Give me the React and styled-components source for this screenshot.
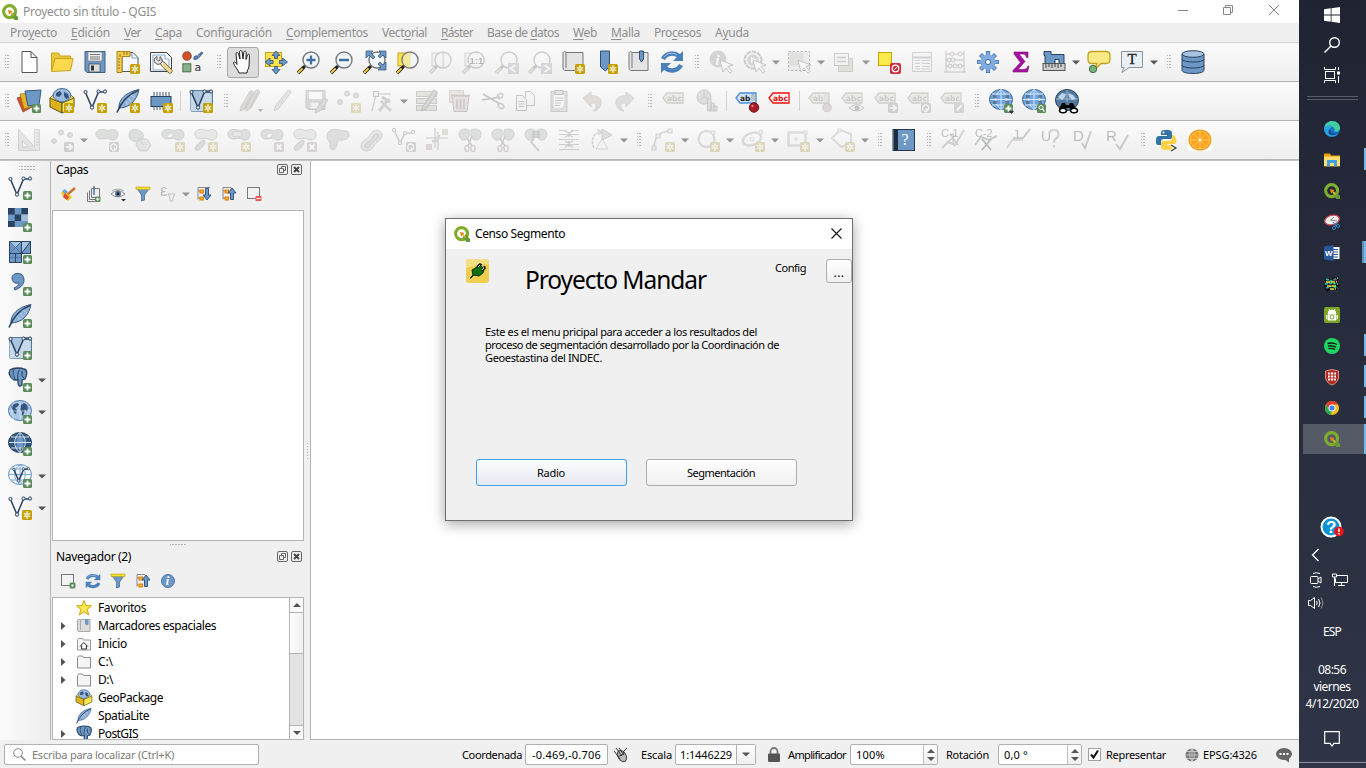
import React, { useLayoutEffect, useRef, useState } from "react";
import styled, { createGlobalStyle, css } from "styled-components";

const Global = createGlobalStyle`
  *, *::before, *::after { box-sizing: border-box; }
  html, body { margin: 0; padding: 0; background: #fff; }
  body { font-family: "Noto Sans", "Open Sans", sans-serif; font-size: 12px; color: #000; overflow: hidden; }
  svg { display: block; flex: none; overflow: visible; }
`;

/* ---------- text ---------- */

const TextBox = styled.span`
  display: block;
  flex: none;
  width: ${(p) => p.$w}px;
  margin-left: ${(p) => p.$ml || 0}px;
  font-size: ${(p) => p.$size || 12}px;
  line-height: ${(p) => p.$lh || 16}px;
  color: ${(p) => p.$color || "inherit"};
  white-space: pre;
`;

// Tracks the text so that it fills exactly the width of its box.
function Text({ w, ml, size, lh, color, children }) {
  const ref = useRef(null);
  const [spacing, setSpacing] = useState(0);
  useLayoutEffect(() => {
    const el = ref.current;
    const natural = el.getBoundingClientRect().width;
    const count = el.textContent.length;
    setSpacing((w - natural) / count);
  }, [w]);
  return (
    <TextBox $w={w} $ml={ml} $size={size} $lh={lh} $color={color}>
      <span ref={ref} style={{ letterSpacing: spacing }}>{children}</span>
    </TextBox>
  );
}

/* ---------- shared drawing parts ---------- */

const BLUE = "#6d97c4";
const NAVY = "#2a4361";

const AddBadge = () => (
  <g>
    <rect x="15" y="15" width="9" height="9" rx="1.5" fill="#5b8c5a" stroke="none" />
    <path d="M19.5 16.5v6M16.5 19.5h6" stroke="#fff" strokeWidth="1.8" />
  </g>
);
const NewBadge = () => (
  <g>
    <rect x="14" y="14" width="10" height="10" rx="1.5" fill="#c4a000" stroke="none" />
    <path d="M19 15.3v7.400M15.800 17.2l6.400 3.6M22.200 17.2l-6.400 3.6" stroke="#fff" strokeWidth="1.3" />
    <circle cx="19" cy="19" r=".8" fill="#c4a000" stroke="none" />
  </g>
);
const ArrowBadge = () => (
  <g>
    <rect x="14" y="14" width="10" height="10" rx="1.5" fill="#8a8a8a" stroke="none" />
    <path d="M15.5 19h5M19 16.2l3 2.8-3 2.8" stroke="#fff" strokeWidth="1.6" fill="none" />
  </g>
);
const TurnBadge = () => (
  <g>
    <rect x="14" y="14" width="10" height="10" rx="1.5" fill="#8a8a8a" stroke="none" />
    <path d="M17 21.5a3 3 0 1 1 2 .5M19.5 19.5v3h-2.5" stroke="#fff" strokeWidth="1.3" fill="none" />
  </g>
);
const DelBadge = () => (
  <g>
    <rect x="14" y="14" width="10" height="10" rx="1.5" fill="#b98f97" stroke="none" />
    <path d="M16.5 16.5l5 5M21.5 16.5l-5 5" stroke="#fff" strokeWidth="1.8" />
  </g>
);
const Lens = ({ gray }) => (
  <g>
    <path d="M8.2 15.8L6 18" stroke={gray ? "#666" : "#222"} strokeWidth="3" />
    <path d="M6.5 17.5L1 23" stroke={gray ? "#777" : "#1c1c1c"} strokeWidth="3.6" />
    <path d="M5.6 18.4L1.2 22.8" stroke={gray ? "#c9c19b" : "#f9d13c"} strokeWidth="2" />
    <circle cx="14" cy="10" r="8" fill="#f2f5f7" fillOpacity=".75" stroke="#75797c" strokeWidth="1.4" />
  </g>
);
const BLOB_PATH = "M1 7C0 3 4 1 8 1.500c4 .5 5 1.500 8 .5 4-1.500 7 1 7 4.500 0 4-3 6-6 5.500-3-1-4-2-7-1.500-4 1-8 1-9-3.500z";
const Blob = ({ fill = "#a5b3a7" }) => <path d={BLOB_PATH} fill={fill} stroke="#7f8981" />;
const Polyline = ({ sw = 1.5 }) => (
  <g stroke={NAVY} fill="none">
    <path d="M2.5 3.5L9 18.5 15.5 3h6" strokeWidth={sw} />
    <g fill="#e8edf2" strokeWidth="1"><circle cx="2.5" cy="3" r="1.6" /><circle cx="9" cy="18.5" r="1.7" /><circle cx="15.5" cy="2.5" r="1.6" /><circle cx="22" cy="2.5" r="1.6" /></g>
  </g>
);
const Feather = () => (
  <g>
    <path d="M23 .5C15 2 8 6 5 11c-2 3-2 6-2 8 5 0 10-2 13-5 4-4 6-8 7-13.500z" fill="#8fb2d8" stroke="#3b5c83" />
    <path d="M22 1.500C13 5 5 13 1 23.500" stroke={NAVY} strokeWidth="1.5" fill="none" />
    <path d="M9 12l3 4M12 9l3 4M15 6l4 3" stroke="#c4d9ee" strokeWidth=".9" />
  </g>
);
const Globe = ({ fill = "#8db9e8", line = "#fff", edge = "#4b7fbd" }) => (
  <g>
    <ellipse cx="12" cy="10.500" rx="11.5" ry="10" fill={fill} stroke={edge} />
    <path d="M1 10.500h22M3 5h18M3 16h18M12 .5v20M12 .5c-7 5-7 15 0 20M12 .5c7 5 7 15 0 20" stroke={line} fill="none" />
  </g>
);
const World = () => (
  <g>
    <ellipse cx="12" cy="10.500" rx="11.5" ry="10" fill="#a9c6e6" stroke="#4b76a8" />
    <path d="M3 6l3-2 4-1 1 2-2 2-2 1 2 2-1 4-2-1-1-3-2-2zM13 5l3-2 4 2 1 4-2 1 1 2-2-1-1-2-1 4-1 3-1-1v-3l-2-2z" fill="#33557f" />
    <path d="M1 11h22M12 1v19M6 2q-5 8 0 17M18 2q5 8 0 17" stroke="#dbe8f5" strokeWidth=".7" fill="none" />
  </g>
);
const Tag = ({ stroke = "#8b8a72", fill = "#cfcebd", text = "#77766a", label = "abc" }) => (
  <g>
    <path d="M1 9l4-5h16v10H5z" fill={fill} stroke={stroke} strokeWidth="1.3" />
    <text x="5" y="12" fontFamily="DejaVu Sans" fontWeight="700" fontSize="7.500" fill={text}>{label}</text>
  </g>
);
const Cylinder = () => (
  <g fill={BLUE} stroke={NAVY}>
    <path d="M1 4v16c0 2 4 3.500 11 3.500S23 22 23 20V4" />
    <path d="M1 9c0 4 22 4 22 0M1 15c0 4 22 4 22 0" fill="none" />
    <ellipse cx="12" cy="4" rx="11" ry="3.300" fill="#a8c3df" />
  </g>
);
const Scissors = () => (
  <g stroke="#777" fill="none">
    <path d="M9 10l5 8M14 8l-4 10" strokeWidth="1.500" />
    <ellipse cx="9" cy="20.500" rx="2" ry="3" stroke="#a88" strokeWidth="1.500" /><ellipse cx="15" cy="20.500" rx="2" ry="3" stroke="#a88" strokeWidth="1.500" />
  </g>
);
const Lobes = () => (
  <g fill="#a5b3a7" stroke="#7f8981">
    <path d="M11 2C7 0 1 1 1 6s5 8 8 5 2-5 2-9zM13 2c4-2 10-1 10 4s-5 8-8 5-2-5-2-9z" />
  </g>
);
const Cube = () => (
  <g>
    <path d="M0 9l12 5v10L0 18z" fill="#dcb31b" stroke="#5f5012" /><path d="M12 14l12-5v9l-12 6z" fill="#fbe850" stroke="#5f5012" />
    <path d="M0 9l4-4 8 9zM24 9l-4-4-8 9z" fill="#f2dc66" stroke="#5f5012" strokeWidth=".7" />
    <path d="M3 7a9 7.500 0 0 1 18 0c-2 4-5 5-9 6-4-1-7-2-9-6z" fill="#9dbbdc" stroke="#466c99" />
    <path d="M6 4l4-2 2 3-3 3-3-1zM14 3l4 2 1 4-3 1-2-3z" fill="#33557f" />
  </g>
);
const Cursor = () => <path d="M11 10l13 5-5 1.500 4 5-2 1.800-4-5.300-3 4z" fill="#fff" stroke="#666" />;
const Refresh = () => (
  <g fill="none" stroke="#4b80bb" strokeWidth="4.500">
    <path d="M3 9c3-6 11-7 16-3" /><path d="M21 15c-3 6-11 7-16 3" />
    <path d="M23 1v10H13z" fill="#4b80bb" stroke="none" /><path d="M1 23V13h10z" fill="#4b80bb" stroke="none" />
    <path d="M4 7c3-4 9-5 13-2" stroke="#a9caeb" strokeWidth="1" />
  </g>
);
const Elephant = () => (
  <g fill={BLUE} stroke={NAVY}>
    <path d="M2 2c4-3 12-2 14-1 4 1 3 6 1 10l-3 1v5c-2 2-4 1-4-2v-3H6C2 10 0 5 2 2z" strokeWidth="1.300" />
    <path d="M6 1.500C4 5 6 8 7 11M12 1.500C9 4 10 9 10 12M14 3v5l2 2" fill="none" />
  </g>
);
const Check = ({ letter, mark }) => (
  <g fill="none">
    <path d={mark} stroke="#5f7c73" strokeWidth="2" />
    <text x="0" y="13" fontFamily="Liberation Sans" fontSize="15" fill="#444">{letter}</text>
  </g>
);
const Crossout = "M1 20l6-6 7 3 9-15";

/* ---------- toolbar icons, 24 x 24 ---------- */

const icons = {
  newDoc: <path d="M5 1.500h9l6 6v15H5zM14 1.500v6h6" fill="#fff" stroke="#555" />,
  open: <g stroke="#c8a41c"><path d="M1.500 21V3h7l2 3h10v4" fill="#e9c63a" /><path d="M1.500 21.500L5 8.500h18l-2.500 12z" fill="#fcd94e" /></g>,
  save: <g><path d="M2 1.500h20v21H4l-2-2z" fill={BLUE} stroke="#3f6187" /><rect x="5" y="2" width="14" height="9" fill="#eee" stroke="#777" strokeWidth=".6" /><path d="M7 4.500h10M7 7h10M7 9h10" stroke="#777" /><rect x="6" y="14" width="11" height="8" fill="#d8dde2" stroke="#444" strokeWidth=".7" /><rect x="8" y="15.500" width="3" height="5" fill="#333" /></g>,
  layout: <g><path d="M6 2.500h11l5 5v14H6z" fill="#f5f8fb" stroke="#555" /><path d="M8 5h8M16 3v5h6" stroke="#7ea6d0" fill="none" /><path d="M1 1.500h13v5H6v16H1z" fill="#f5cd4c" stroke="#a9851c" /><path d="M4 4v3M8 2v3M11 2v3M2 9h2M2 12h2M2 15h2M2 18h2" stroke="#8f7216" /><NewBadge /></g>,
  layoutManager: <g><path d="M1.500 2.500h16l5 5v14h-21z" fill="#f9fbfd" stroke="#444" /><path d="M4 5h12v4h4v11H4z" fill="none" stroke="#86abd4" /><path d="M11 11l3 3" stroke="#555" strokeWidth="4.500" /><path d="M14.500 14.500l6.500 6.500" stroke="#7b6c35" strokeWidth="5.200" strokeLinecap="round" /><path d="M10 10l5 5" stroke="#eee" strokeWidth="2.800" /><path d="M15 15l6 6" stroke="#f0d994" strokeWidth="3.500" strokeLinecap="round" /><path d="M8 6.500a4 4 0 1 0 5 5c.5-2-.5-4-2-5v3.500L9.500 11 8 9.500z" fill="#e4e4e4" stroke="#555" /></g>,
  style: <g><circle cx="5" cy="6" r="4.300" fill="#d0522b" stroke="#91361a" strokeWidth=".8" /><rect x=".8" y="13.800" width="8" height="8" fill="#8bb08b" stroke="#4a704a" /><path d="M12 9q0-3 3-3l1.500 1.500Q15 10 12 9zM16 5.500L20 2M17 7l4-4.500" fill={BLUE} stroke="#476f9b" strokeWidth="1.300" /><text x="12.500" y="20.500" fontSize="11" fontFamily="DejaVu Sans" fill="#333">a</text></g>,
  hand: <path d="M8 23c-1-4-5-7-5.500-10 .5-2 2-1 3.500 1.500L5 4c0-2 2-2 2.500 0L9 9 8.500 2c.2-2 2.500-2 2.700 0L12 9l.8-6.500c.4-2 2.500-1.500 2.400 0L15 9.500l1.500-4.500c.7-1.500 2.300-1 2 .5L18 16c-.2 3-2 4-2 7z" fill="#fff" stroke="#222" />,
  panSel: <g><rect x="1.500" y="2.500" width="16" height="14" fill="#fce24b" stroke="#c8a41c" /><g fill={BLUE} stroke="#2f4f76" strokeWidth=".8"><path d="M12 1l4 4.500h-2.500v3h-3v-3H8zM12 24l4-4.500h-2.500v-3h-3v3H8zM1 12l5-4v2.500h3v3H6V16zM23.500 12l-5-4v2.500h-3v3h3V16z" /></g></g>,
  zoomIn: <g><Lens /><path d="M14 5.500v9M9.500 10h9" stroke="#3f6f9f" strokeWidth="2.300" /></g>,
  zoomOut: <g><Lens /><path d="M9 10h10" stroke="#3f6f9f" strokeWidth="2.500" /></g>,
  zoomFull: <g><Lens /><g fill={BLUE} stroke="#2f4f76" strokeWidth=".7"><path d="M3 1h7L8 3l4 4-2 2-4-4-3 3zM23 1v7l-3-3-3 3-2-2 3-3-2-2zM23 20h-8l3-3-3-3 2-2 3 3 3-3z" /></g></g>,
  zoomSel: <g><rect x="2" y="3" width="12" height="13" fill="#fce24b" stroke="#c8a41c" /><Lens /><path d="M8 5.500q3-3 6-3v15c-6 0-9-7-6-12z" fill="#f3e58b" opacity=".8" /></g>,
  zoomLayer: <g><rect x="3" y="3" width="12" height="13" fill="#eee" stroke="#888" /><Lens gray /><path d="M14 3v14" stroke="#888" /></g>,
  zoomNative: <g><rect x="3" y="3" width="12" height="13" fill="#eee" stroke="#888" /><Lens gray /><text x="7.500" y="13.500" fontSize="9.500" fontWeight="700" fontFamily="Liberation Sans" fill="#333">1:1</text></g>,
  zoomLast: <g><Lens gray /><rect x="13" y="13" width="11" height="11" fill="#93a1ad" /><path d="M20.500 15l-5 3.500 5 3.500" stroke="#fff" strokeWidth="1.800" fill="none" /></g>,
  zoomNext: <g><Lens gray /><rect x="13" y="13" width="11" height="11" fill="#93a1ad" /><path d="M16.500 15l5 3.500-5 3.500" stroke="#fff" strokeWidth="1.800" fill="none" /></g>,
  newMap: <g><path d="M5 2.500h17v18H5c-2.500 0-3-1-3-3V3c.5-2 3-2 3 0v15" fill="#e4e4e4" stroke="#777" /><NewBadge /></g>,
  bookmarkNew: <g><path d="M6.500 1h9v15l-4 5-5-4z" fill={BLUE} stroke="#2f4f76" /><NewBadge /></g>,
  bookmark: <g><path d="M5 2.500h16v18H5c-2.500 0-3-1-3-3V3c.5-2 3-2 3 0v15" fill="#e4e4e4" stroke="#777" /><path d="M12.500 1h4v8l-2 3-2-3z" fill={BLUE} stroke="#2f4f76" /></g>,
  refresh: <Refresh />,
  identify: <g><circle cx="9" cy="9" r="8.500" fill="#87949c" /><text x="6.500" y="14.500" fontSize="15" fontFamily="Liberation Serif" fontStyle="italic" fontWeight="700" fill="#fff">i</text><Cursor /></g>,
  action: <g><circle cx="11" cy="10" r="8.500" fill="#ddd" stroke="#777" strokeWidth="2" strokeDasharray="4.500 1" /><circle cx="11" cy="10" r="5.500" fill="#8d989f" /><path d="M9 7l6 3-6 3z" fill="#fff" /><Cursor /></g>,
  select: <g><rect x="1.500" y="1.500" width="21" height="19" fill="#ddd" stroke="#444" strokeDasharray="2.500 1.500" /><rect x="2.500" y="2.500" width="14" height="13" fill="#bdb7a3" /><Cursor /></g>,
  selectForm: <g><rect x="6.500" y="8.500" width="14" height="13" fill="#bdb993" stroke="#8c8977" /><rect x="2.500" y="3.500" width="14" height="12" fill="#eee" stroke="#777" /><path d="M5 7.500h9M5 11.500h9" stroke="#777" strokeWidth="1.500" /></g>,
  deselect: <g><rect x="1.500" y="2.500" width="13" height="13" fill="#fce94f" stroke="#c8a400" /><rect x="13" y="13" width="11" height="11" rx="2" fill="#cf2b3b" /><circle cx="18.500" cy="18.500" r="3.300" fill="none" stroke="#fff" strokeWidth="1.300" /><path d="M16 21l5-5" stroke="#fff" /></g>,
  table: <g><rect x="2.500" y="2.500" width="19" height="19" fill="#eef0f2" stroke="#889" /><path d="M3 7.500h18" stroke="#889" strokeWidth="2" /><path d="M5 10.500h5M12 10.500h8M5 13.500h5M12 13.500h8M5 16.500h5M12 16.500h8M5 19h5M12 19h8" stroke="#889" /></g>,
  abacus: <g fill="none" stroke="#666"><path d="M3 1v21M21 1v21M1 22h22M3 4h18M3 10h18M3 16h18" /><g fill="#eaeaea"><circle cx="9" cy="4" r="2" stroke="#a66" /><circle cx="17" cy="4" r="2" stroke="#a66" /><circle cx="6" cy="10" r="2" /><circle cx="10" cy="10" r="2" /><circle cx="7" cy="16" r="2" /><circle cx="12" cy="16" r="2" /><circle cx="17" cy="16" r="2" /></g></g>,
  gear: <g><g stroke="#3f6fa8" strokeWidth="4.200"><path d="M12 1v22M1 12h22M4.500 4.500l15 15M19.500 4.500l-15 15" /></g><g stroke="#7fabe0" strokeWidth="2.800"><path d="M12 1.700v20.600M1.700 12h20.600M5 5l14 14M19 5L5 19" /></g><circle cx="12" cy="12" r="7.500" fill="#7fabe0" /><circle cx="12" cy="12" r="2.600" fill="#f4f4f4" stroke="#3f6fa8" /></g>,
  sigma: <path d="M5 2h14v5.500h-1.500C17 5 16 4 14 4h-4l6 7.500L9 19.500h5c3 0 4-1 5-3.500h1l-1.500 6H4v-1.500l7.500-8L5 4z" fill="#a6119f" stroke="#7b0c76" strokeWidth=".6" />,
  measure: <g><path d="M2 1.500h7v3h13v9h-5v-4h-4v4H3v-8H2z" fill={BLUE} stroke={NAVY} /><rect x="1" y="13.500" width="22" height="7" fill="#ccc" stroke="#555" /><path d="M4 14v4M7 14v3M10 14v4M13 14v3M16 14v4M19 14v3" stroke="#444" /></g>,
  tip: <g><path d="M5 1.500h14q4 0 4 4v4q0 4-4 4h-5l-6 6 2-6H5q-4 0-4-4v-4q0-4 4-4z" fill="#faea86" stroke="#c2a11e" strokeWidth="1.300" /><circle cx="6" cy="19" r="3.700" fill="#7ab07a" stroke="#417041" /></g>,
  annotation: <g><path d="M1.500 1.500h21v16H9l-7 5 2-5H1.500z" fill="#e9f0f4" stroke="#8b959c" /><text x="7.500" y="14" fontSize="15" fontFamily="Liberation Serif" fill="#222" stroke="#222" strokeWidth=".3">T</text></g>,
  db: <Cylinder />,

  dataSource: <g><path d="M0 9l10-3 5 12-9 5z" fill="#d0522b" stroke="#91361a" strokeWidth=".7" /><path d="M3 5l10-1 4 13-10 3z" fill="#e6b422" stroke="#94711a" strokeWidth=".7" /><path d="M8 2l16-1-2 15-11 1z" fill={BLUE} stroke="#34587f" /><AddBadge /></g>,
  geopackage: <g><Cube /><NewBadge /></g>,
  shape: <g><Polyline /><NewBadge /></g>,
  spatialite: <g><Feather /><NewBadge /></g>,
  memory: <g><path d="M5 3v18M8 3v18M11 3v18M14 3v18M17 3v18M20 3v18" stroke="#4a5e73" /><rect x="2" y="7.500" width="20" height="10" fill={BLUE} stroke={NAVY} /><NewBadge /></g>,
  virtual: <g><rect x="1.500" y="1.500" width="22" height="21" rx="1.500" fill="#a9c4df" stroke="#5a7ba0" /><path d="M1.500 22.500V5l8 14 5-15h8v18z" fill="#c8d9ea" /><Polyline /><NewBadge /></g>,
  pencils: <g stroke="#8a8079"><path d="M9 16L18 1q3-1 4 2L13 19l-5 3zM3 18L12 2q3-1 4 2L7 20l-5 2z" fill="#b7a698" /><path d="M6 20L14 4M12 19L20 3" strokeWidth="1.200" /><path d="M20 20h5l-2.500 3z" fill="#333" stroke="none" /></g>,
  pencil: <g stroke="#8a8a80"><path d="M5 16L17 1q3 0 3 2.500L8 19l-5 3z" fill="#cfcab0" /><path d="M6.500 17L18 2.500" strokeWidth=".8" /></g>,
  saveEdits: <g><path d="M2 1.500h19v19H4l-2-2z" fill="#9aa4ad" stroke="#777" /><rect x="5" y="3" width="13" height="7" fill="#fff" /><rect x="6" y="13" width="9" height="7" fill="#e6e6e6" stroke="#666" strokeWidth=".6" /><path d="M12 21L20 9l4 2-8 11-5 2z" fill="#b7a698" stroke="#777" /></g>,
  addFeature: <g fill="#a9b0a9" stroke="#7d857d"><circle cx="3" cy="13" r="2.500" /><circle cx="10" cy="4.500" r="2.500" /><circle cx="19" cy="6.500" r="2.500" /><NewBadge /></g>,
  vertex: <g fill="none" stroke="#666"><path d="M2 22L6 6M8 5h13" /><rect x="3.500" y="2.500" width="5" height="5" fill="#ddd" /><path d="M11 12l10 10M9 22l10-12" strokeWidth="3" stroke="#8d9294" /><path d="M12 8l8 5" stroke="#888" strokeWidth="3" /></g>,
  multiEdit: <g><g fill="#bdc19d" stroke="#777"><rect x="1.500" y="2.500" width="20" height="5" /><rect x="1.500" y="9.500" width="20" height="5" /><rect x="1.500" y="16.500" width="20" height="5" /></g><path d="M8 17L19 1l3.500 2.500L11 20l-5 2z" fill="#a19b92" stroke="#555" /></g>,
  trash: <g><rect x="1.500" y="1.500" width="14" height="12" fill="#c9c2a4" stroke="#999" /><path d="M4 7h17l-2 15.500H6z" fill="#d3babb" stroke="#8d6565" /><path d="M3 6.500h19M9 10v10M12.500 10v10M16 10v10" stroke="#8d6565" strokeWidth="1.500" /></g>,
  cut: <g stroke="#666" fill="none"><path d="M2 5l17 10M1 11l18-3" strokeWidth="1.500" /><ellipse cx="19" cy="7" rx="3" ry="2.200" stroke="#977" strokeWidth="1.500" transform="rotate(-35 19 7)" /><ellipse cx="20" cy="17" rx="3" ry="2.200" stroke="#977" strokeWidth="1.500" transform="rotate(35 20 17)" /></g>,
  copy: <g fill="#f2f2f2" stroke="#666"><path d="M11.500 2.500h5l4 4v10h-9z" /><path d="M2.500 6.500h6l4 4v11h-10z" /><path d="M4.500 12.500h6M4.500 15h6M4.500 17.500h6" /></g>,
  paste: <g><rect x="4" y="2.500" width="16" height="20" fill="#c7c1a9" stroke="#777" /><path d="M6 5h12v11l-3 4H6z" fill="#f5f5f5" stroke="#888" /><rect x="8" y="1.500" width="8" height="4" fill="#bbb" stroke="#555" /><path d="M8 9h8M8 11.500h8M8 14h6M8 16.500h5" stroke="#777" /></g>,
  undo: <path d="M3 9l8-6v4c6-1 11 2 10 8-1 4-4 7-8 7 5-4 4-9-2-8v4z" fill="#bda89b" stroke="#a08c80" />,
  redo: <path d="M21 9l-8-6v4C7 6 2 9 3 15c1 4 4 7 8 7-5-4-4-9 2-8v4z" fill="#a9b3a9" stroke="#8b978f" />,
  label: <Tag />,
  diagram: <g stroke="#777"><circle cx="9" cy="8" r="7" fill="#a8bfae" /><path d="M9 8V1a7 7 0 0 1 6 10z" fill="#c4a3a3" /><path d="M9 8l6 3A7 7 0 0 1 3 12z" fill="#a8b3bf" /><path d="M12.500 10h3.500v12h-3.500zM16 14h3v8h-3zM19 17h3v5h-3z" fill="#b8b4a8" /></g>,
  pinLabel: <g><Tag fill="#cfe3f7" stroke="#4a90d9" text="#222" label="ab" /><path d="M17 12V6q0-2 2 0v6" fill="#eee" stroke="#999" /><circle cx="19" cy="18.500" r="4.700" fill="#a81d25" stroke="#741016" /><circle cx="17.500" cy="17" r="1.200" fill="#e08080" /></g>,
  redLabel: <Tag fill="#ffecec" stroke="#f01010" text="#d01414" />,
  pinGray: <g><Tag label="ab" /><path d="M17 12V6q0-2 2 0v6" fill="#eee" stroke="#999" /><circle cx="19" cy="18.500" r="4.300" fill="#b79ca0" stroke="#8d7378" /></g>,
  showLabel: <g><Tag /><path d="M8 19q8-7 15 0-7 6-15 0z" fill="#eee" stroke="#666" /><circle cx="16" cy="19" r="2.500" fill="#666" /></g>,
  moveLabel: <g><Tag /><ArrowBadge /></g>,
  rotateLabel: <g><Tag /><TurnBadge /></g>,
  changeLabel: <g><Tag /><rect x="14" y="14" width="10" height="10" rx="1.500" fill="#9b9880" /><path d="M16 22l1-2.500 4-4 1.500 1.500-4 4z" fill="#fff" /></g>,
  webAdd: <g><Globe fill="#6ba5e4" line="#dbe9f8" edge="#3f628c" /><path d="M4 6h4v3H4zM16 6h4v3h-4zM4 12h4v3H4zM16 12h4v3h-4z" fill="#555e68" opacity=".65" /><AddBadge /><path d="M20 22h5l-2.500 3z" fill="#333" /></g>,
  webFind: <g><Globe fill="#6ba5e4" line="#dbe9f8" edge="#3f628c" /><path d="M4 6h4v3H4zM16 6h4v3h-4zM4 12h4v3H4zM16 12h4v3h-4z" fill="#555e68" opacity=".65" /><rect x="15" y="15" width="9" height="9" rx="1.500" fill="#5b8c5a" /><circle cx="19" cy="18.500" r="2" stroke="#fff" fill="none" /><path d="M20.500 20l2 2.500" stroke="#fff" strokeWidth="1.300" /></g>,
  webSearch: <g><ellipse cx="12" cy="11" rx="11.500" ry="10.500" fill="#54799f" stroke="#27425f" /><path d="M3 8l4-4 4 1-1 3-3 3zM13 4l5 2 3 4-4 1-3-3z" fill="#bcd5ee" /><path d="M1 10h22M12 1v12" stroke="#cfe0f1" strokeWidth=".6" /><path d="M4 20l3-6h3l1 2h3l1-2h3l3 6-4 3-2-4h-5l-2 4z" fill="#000" /><ellipse cx="8" cy="21.500" rx="3.500" ry="2.300" fill="#fff" stroke="#000" strokeWidth="1.500" /><ellipse cx="19" cy="21.500" rx="3.500" ry="2.300" fill="#fff" stroke="#000" strokeWidth="1.500" /></g>,

  digitize: <g><path d="M1.500 1.500L21 22.500H1.500z" fill="#c9c4bb" stroke="#888" /><path d="M5.500 12.500l6 6.500h-6z" fill="#f4f4f4" stroke="#888" /><path d="M17.500 1.500h5v21h-3l-2-3z" fill="#ddd8cf" stroke="#999" /><path d="M19 5h3M19 8h3M19 11h3M19 14h3M19 17h3" stroke="#888" /></g>,
  moveFeature: <g fill="#a9b0a9" stroke="#7d857d"><circle cx="4" cy="13" r="2.300" /><circle cx="11" cy="4.500" r="2.500" /><circle cx="20" cy="7" r="2.500" /><ArrowBadge /></g>,
  rotateF: <g><Blob /><TurnBadge /></g>,
  simplify: <g fill="#a5b3a7" stroke="#7f8981"><path d="M1 7c0-6 7-7 11-4 5 2 4 8 0 10S1 13 1 7z" /><path d="M11 11h8l4 6-4 6h-7l-4-6z" fill="#c3c9b9" /><path d="M9 9l7 8" /></g>,
  ring: <g><Blob /><path d="M6 8q3-4 7-2l-2 3q-4 2-5-1z" fill="#f8f8f8" stroke="#999" /><NewBadge /></g>,
  part: <g><Blob fill="#c9cec3" /><path d="M8 13c3-2 4 1 2 4s-5 6-8 5 2-7 6-9z" fill="#a5b3a7" stroke="#7f8981" /><NewBadge /></g>,
  fillRing: <g><Blob /><ellipse cx="10" cy="6" rx="5" ry="3" fill="#c7c9bd" stroke="#888" /><NewBadge /></g>,
  delRing: <g><Blob /><path d="M6 8q3-4 7-2l-2 3q-4 2-5-1z" fill="#f8f8f8" stroke="#999" /><DelBadge /></g>,
  delPart: <g><Blob fill="#c9cec3" /><path d="M8 13c3-2 4 1 2 4s-5 6-8 5 2-7 6-9z" fill="#a5b3a7" stroke="#7f8981" /><DelBadge /></g>,
  reshape: <path d="M1 8c0-6 6-8 12-6 5 1 10 0 10 4 1 5-5 6-8 6s-3 1-4 5c-1 5-7 7-7 1 1-4-3-5-3-10z" fill="#a5b3a7" stroke="#7f8981" />,
  offset: <g><path d="M2 18c0-6 6-5 9-11 2-4 6-6 10-4 4 4 2 8-3 11-3 3-4 8-10 9-4 0-6-2-6-5z" fill="#bdc5bd" stroke="#8d948d" /><path d="M6 18c0-4 6-4 8-9 1-3 4-4 5-2 2 3-2 4-4 6-3 3-4 6-7 7-1 0-2 0-2-2z" fill="#a5b3a7" stroke="#7f8981" /></g>,
  splitRings: <g stroke="#777" fill="none"><path d="M2 2l6 13 5-10h9" strokeWidth="1.500" /><g fill="#ddd"><circle cx="2" cy="2" r="1.700" /><circle cx="8" cy="15" r="1.700" /><circle cx="13" cy="5" r="1.700" /><circle cx="21" cy="4" r="1.700" /></g><TurnBadge /></g>,
  attach: <g stroke="#777" fill="none"><path d="M1 10h22M10 0v20M13 4v18" strokeWidth="1.200" /><path d="M7 13h7M14 10v-3" strokeWidth="2.500" stroke="#999" /><rect x="17" y="1" width="6" height="6" fill="#b8ad84" stroke="none" /><rect x="1" y="16" width="6" height="6" fill="#b99" stroke="none" /></g>,
  splitF: <g><Lobes /><Scissors /></g>,
  merge: <g><Lobes /><path d="M8 4h8M8 6.500h8M8 9h8M10 11l-3 3 8 9" stroke="#666" fill="none" strokeWidth="1.300" /></g>,
  rails: <g stroke="#777" fill="none" strokeWidth=".9"><path d="M2 2.500h7M14 2.500h8M2 6.500h20M2 11.500h20M2 16.500h20M2 21.500h20" /><path d="M8 3l4 2 4-2M8 9l4-2 4 2M8 13l4 2 4-2M8 19l4-2 4 2M12 4v5M12 13v6" strokeWidth="1.300" /></g>,
  rotateS: <g stroke="#777" fill="none"><path d="M4 20C0 12 4 5 10 4" strokeWidth="1.300" strokeDasharray="3 1" /><path d="M7 1l5 3-4 3M12 1l10 6-10 5z" fill="#a5b3a7" /><path d="M12 11l6 10H6z" fill="#f0f0f0" stroke="#999" /></g>,
  curve: <g fill="none" stroke="#888" strokeWidth="1.500"><path d="M3 20C4 10 6 4 19 3" /><g fill="#ddd" strokeWidth="1"><rect x="1" y="18" width="4" height="4" /><rect x="5" y="6" width="4" height="4" /><rect x="17" y="1" width="4" height="4" /></g><NewBadge /></g>,
  circle: <g fill="none" stroke="#a0a8a0" strokeWidth="2.500"><circle cx="10.500" cy="11" r="8" /><rect x="16" y="3" width="3" height="3" strokeWidth="1" fill="#ddd" /><NewBadge /></g>,
  ellipse: <g fill="none" stroke="#a0a8a0" strokeWidth="2.500"><ellipse cx="11" cy="11" rx="9.500" ry="6" transform="rotate(-20 11 11)" /><circle cx="11" cy="11" r="1.800" strokeWidth="1" /><circle cx="20" cy="4" r="1.800" strokeWidth="1" fill="#ddd" /><NewBadge /></g>,
  rect: <g fill="none" stroke="#a0a8a0" strokeWidth="2.500"><rect x="2.500" y="4.500" width="17" height="13" /><rect x="18" y="3" width="3" height="3" strokeWidth="1" fill="#ddd" /><rect x="9" y="10" width="2" height="2" strokeWidth="1" /><NewBadge /></g>,
  polygon: <g fill="none" stroke="#a0a8a0" strokeWidth="2"><path d="M9 2l11 4v10l-10 3-9-9z" /><rect x="7" y="1" width="3" height="3" strokeWidth="1" fill="#ddd" /><NewBadge /></g>,
  help: <g><rect x="1" y="1.500" width="21.500" height="21" fill={BLUE} stroke="#26384e" /><path d="M2 1h4v22H2z" fill="#1d2d3d" /><text x="9.500" y="17" fontSize="16" fontFamily="Liberation Serif" fill="#fff">?</text></g>,
  c1: <g><path d={Crossout} stroke="#9a8080" strokeWidth="2" fill="none" /><path d="M9 6l8 11M7 14l8-7M12 5v11" stroke="#5a7c86" strokeWidth="1.300" /><text x="0" y="9" fontSize="11" fontFamily="Liberation Sans" fill="#444">C-1</text></g>,
  c2: <g><path d="M1 17l6-8 8 3 8-4" stroke="#5f7c73" strokeWidth="2" fill="none" /><path d="M8 11l9 11M17 11L8 22" stroke="#444" strokeWidth="1.800" /><text x="1" y="9" fontSize="11" fontFamily="Liberation Sans" fill="#444">C-2</text></g>,
  j: <g><text x="6" y="11" fontSize="12" fontFamily="Liberation Sans" fill="#444">J</text><path d="M6 11l6-1h4l7-9" stroke="#5a7c76" strokeWidth="2" fill="none" /><path d="M0 20l5-8h11" stroke="#a88" strokeWidth="1.600" fill="none" /></g>,
  u: <g><text x="1" y="13" fontSize="14" fontFamily="Liberation Sans" fill="#444">U</text><path d="M9.500 6q0-4 4.500-4t4.500 4q0 3-2.500 4.500-2 1.500-2 4M14 17v2.500" fill="none" stroke="#a87f86" strokeWidth="2.200" /></g>,
  d: <Check letter="D" mark="M9 15l3 5 6-17" />,
  r: <Check letter="R" mark="M10 16l4 5 8-14" />,
  python: <g><path d="M11 2c-5 0-5 1-5 5h6v1H4c-3 0-3 3-3 5s0 4 3 4h2v-3c0-3 2-3 4-3h5c2 0 2-1 2-3V5c0-3-3-3-6-3z" fill="#3573a5" /><path d="M13 22c5 0 5-2 5-5h-6v-1h7c2 0 3-2 2-5s-1-4-3-4h-1v3c0 3-2 3-4 3H9c-2 0-3 1-3 3v3c0 3 4 3 7 3z" fill="#fdd244" /><circle cx="8.500" cy="4.500" r="1" fill="#fff" /><path d="M16 17l5 3-5 3" stroke="#fff" strokeWidth="3" fill="none" /><path d="M16 17l5 3-5 3" stroke="#333" strokeWidth="1.300" fill="none" /></g>,
  orange: <g><rect width="24" height="22" y="1" fill="#fff" /><ellipse cx="12" cy="12" rx="11.500" ry="10.500" fill="#f39a12" /><ellipse cx="12" cy="12" rx="9.700" ry="8.800" fill="#ffa31a" stroke="#fbd080" strokeWidth=".8" /><path d="M12 3v18M3 12h18M6 6l12 12M18 6L6 18" stroke="#ffcf7b" strokeWidth=".8" /><circle cx="12" cy="12" r="1.500" fill="#fff3c9" /></g>,

  vAdd: <g><Polyline /><AddBadge /></g>,
  raster: <g><rect x="0" y="0" width="20" height="19" fill={BLUE} /><path d="M0 0h6.700v6.500H0zM13.400 0H20v6.500h-6.600zM6.700 6.500h6.700V13H6.700zM0 13h6.700v6H0z" fill={NAVY} /><path d="M13.400 6.500H20V13h-6.600z" fill="#a3bedb" /><AddBadge /></g>,
  mesh: <g stroke={NAVY}><path d="M1.500 1.500h21v12h-9v9h-12z" fill={BLUE} /><path d="M2 2h11l-5.500 5.500zM14 2h8l-8 10z" fill="#a9c4df" stroke="none" /><path d="M1.500 1.500l12 12M13.500 1.500l-12 12" fill="none" stroke="#48698f" strokeWidth=".8" /><path d="M13.500 13.500l9-12M1.500 13.500h21M13.500 1.500v21M7.500 14v8.500" fill="none" /><path d="M2 17.500h11" stroke="#48698f" strokeWidth=".8" /><AddBadge /></g>,
  comma: <g><path d="M4 6c0-6 12-7 12 2 0 5-4 8-9 10l-1-2c3-1 5-3 5-5-4 1-7-1-7-5z" fill={BLUE} stroke="#34587f" /><AddBadge /></g>,
  featherAdd: <g><Feather /><AddBadge /></g>,
  virtualAdd: <g><rect x="1.500" y="1.500" width="22" height="21" rx="1.500" fill="#a9c4df" stroke="#5a7ba0" /><path d="M1.500 22.500V5l8 14 5-15h8v18z" fill="#c8d9ea" /><Polyline /><AddBadge /></g>,
  postgis: <g><Elephant /><AddBadge /></g>,
  wms: <g><World /><AddBadge /></g>,
  wcs: <g><Globe fill="#33557f" line="#d7e6f5" edge="#243c59" /><path d="M8.500 6h7v4h-7zM8.500 11h7v4h-7z" fill={BLUE} /><AddBadge /></g>,
  wfs: <g><Globe fill="#f4f8fc" line="#7fabd8" edge="#5b8fc7" /><g transform="translate(4 3) scale(.75)"><Polyline sw={2} /></g><AddBadge /></g>,
};

const small = {
  brush: <g><path d="M1 6l5-1 6 6-4 4Q3 12 1 6z" fill="#f1c71f" /><path d="M2 5l3-2 3 3-3 2z" fill="#67a7dc" /><path d="M5 7l4 4-2 3-4-3z" fill="#e2483a" /><path d="M8 8l7-6" stroke="#c87533" strokeWidth="2.500" /></g>,
  group: <g fill="#eee" stroke="#777"><path d="M6.500 2.500h8v9h-8z" /><path d="M4.500 4.500v9h8M2.500 6.500v9h8" fill="none" /><path d="M9 0v9" stroke="#4b76a8" strokeWidth="1.500" /><rect x="10" y="10.500" width="5.500" height="5.500" rx="1" fill="#5b8c5a" stroke="none" /><path d="M12.700 11.500v3.500M11 13.200h3.500" stroke="#fff" /></g>,
  eye: <g><path d="M1 8q7-7 14 0-7 6-14 0z" fill="#f5f5f5" stroke="#888" /><path d="M2 5q6-4 12 0" stroke="#aaa" fill="none" /><circle cx="8" cy="7.800" r="3" fill="#54799f" /><circle cx="8" cy="7.800" r="1.300" fill="#111" /><path d="M11 13h5l-2.500 2.500z" fill="#333" /></g>,
  filter: <g><path d="M1.500 2l5 7v6l3-1V9l5-7z" fill={BLUE} stroke="#466c99" strokeWidth=".8" /><path d="M1 1h14v2.500H1z" fill="#f5df2c" stroke="#b79f1a" strokeWidth=".6" /></g>,
  epsilon: <g><text x="0" y="10" fontSize="17" fontFamily="Liberation Sans" fill="#777">ε</text><path d="M8 8h7l-2 4v3H10v-3z" fill="#eee" stroke="#888" /></g>,
  expand: <g><path d="M2 1.500h12M2 1.500v12M2 5h3M2 12h3" stroke="#888" /><rect x="4" y="4" width="3.500" height="3" fill="#ffb347" stroke="#e27c00" /><rect x="4" y="11" width="3.500" height="3" fill="#ffb347" stroke="#e27c00" /><path d="M9.500 2.500h3v6.500H15l-4 5-4-5h2.500z" fill={BLUE} stroke="#2f5685" /></g>,
  collapse: <g><path d="M2 1.500h8M2 1.500v12M2 5h3M2 12h3" stroke="#888" /><rect x="4" y="4" width="3.500" height="3" fill="#ffb347" stroke="#e27c00" /><rect x="4" y="11" width="3.500" height="3" fill="#ffb347" stroke="#e27c00" /><path d="M9.500 13.500h3V7H15l-4-5-4 5h2.500z" fill={BLUE} stroke="#2f5685" /></g>,
  remove: <g><rect x="1.500" y="1.500" width="12" height="11" fill="#f2f2f2" stroke="#777" /><rect x="9.500" y="10" width="6" height="5" rx="1" fill="#ef5252" /><path d="M10.500 12.500h4" stroke="#fff" strokeWidth="1.200" /></g>,
  addSel: <g><rect x="1.500" y="1.500" width="12" height="11" fill="#f2f2f2" stroke="#777" /><rect x="9.500" y="9.500" width="6" height="6" rx="1.500" fill="#5b8c5a" /><rect x="11.500" y="11.500" width="2" height="2" fill="#fff" /></g>,
  refresh: <g transform="scale(.667)"><Refresh /></g>,
  info: <g><circle cx="8" cy="8" r="6.500" fill={BLUE} stroke="#4a76a8" /><text x="5.800" y="12" fontSize="12" fontFamily="Liberation Serif" fontStyle="italic" fontWeight="700" fill="#fff">i</text></g>,
  star: <path d="M8 .5l2 5 5.500.3-4.300 3.500 1.500 5.700L8 11.800 3.300 15l1.500-5.700L.5 5.800 6 5.500z" fill="#fbe84e" stroke="#cba61b" />,
  book: <g><path d="M4.500 1.500h9.500v12H3q-1.500 0-1.500-1.500V2Q3 .5 4.500 2v10" fill="#dcdcdc" stroke="#aaa" /><path d="M9 1h3.500v5l-1.700 1.500L9 6z" fill={BLUE} /></g>,
  home: <g><path d="M1.500 3.500l1-1h4l1 1.500h7v10h-13z" fill="#f4f4f4" stroke="#999" /><path d="M4 10.500L7.800 6.500l4 4M5.500 9.500v3.500h5V9.500" stroke="#333" fill="none" /></g>,
  folder: <path d="M1.500 3.500l1-1.500h4l1 1.500h7v10.500h-13z" fill="#f4f4f4" stroke="#8b8b8b" />,
  cube: <g transform="scale(.66)"><Cube /></g>,
  feather: <g transform="scale(.66)"><Feather /></g>,
  elephant: <g transform="scale(.82)"><Elephant /></g>,
};

const QLogo = ({ size = 16 }) => (
  <svg width={size} height={size} viewBox="0 0 16 16">
    <circle cx="7.600" cy="7.600" r="6" fill="none" stroke="#7fae2d" strokeWidth="3.100" />
    <path d="M8.500 11l3-2.500L16 13v3h-3.500z" fill="#6a9a35" />
    <path d="M6 6l4.500 1L7 10.500z" fill="#ef7d1a" />
    <path d="M8.500 8.500l3 3" stroke="#e0b43a" strokeWidth="1.600" />
  </svg>
);

/* ---------- main window ---------- */

const Screen = styled.div`
  display: flex; width: 1366px; height: 768px; overflow: hidden; background: #fff;
`;
const Window = styled.div`
  width: 1299px; height: 768px; display: flex; flex-direction: column; flex: none; background: #f0f0f0;
  position: relative;
`;
const TitleBar = styled.header`
  height: 23px; background: #fff; display: flex; align-items: center; padding: 0 18px 0 2px; color: #8f8f8f; flex: none;
`;
const Spacer = styled.div`flex: 1;`;
const WindowButtons = styled.div`
  display: flex; gap: 34px; margin-top: -3px;
`;
const MenuBar = styled.nav`
  height: 20px; display: flex; align-items: center; gap: 14px; padding-left: 10px; color: #8e8e8e;
  border-bottom: 1px solid #d0d0d0; flex: none;
`;
const Mnemonic = styled.span`text-decoration: underline; text-underline-offset: 2px;`;
const ToolRow = styled.div`
  height: 39px; display: flex; align-items: center; flex: none; padding-left: 1px;
  background: linear-gradient(#fbfbfb, #eeeeee); border-bottom: 1px solid #b4b4b4;
`;
const Cell = styled.div`
  width: 33px; height: 32px; flex: none; display: flex; align-items: center; justify-content: center;
  ${(p) => p.$off && css`svg { opacity: .33; filter: saturate(.5); }`}
  ${(p) => p.$active && css`
    height: 31px; width: 32px; margin: 0 0 0 1px; border: 1px solid #a8a8a8; border-radius: 3px; background: #dcdcdc;
  `}
`;
const GripBox = styled.div`
  width: ${(p) => (p.$first ? 11 : 16)}px; flex: none; padding-left: ${(p) => (p.$first ? 4 : 7)}px;
`;
const Dots = styled.div`
  width: ${(p) => p.$w}px; height: ${(p) => p.$h}px;
  background: conic-gradient(from 90deg at 1px 1px, transparent 270deg, #b3b3b3 0) -2px -2px / 3px 3px;
`;
const DropBox = styled.div`
  width: 12px; flex: none; display: flex; padding-left: 2px; ${(p) => p.$off && "opacity: .6;"}
`;
const Divider = styled.div`width: 1px; height: 20px; margin: 0 3px; background: #d2d2d2; flex: none;`;

const Arrow = ({ off }) => (
  <DropBox $off={off}>
    <svg width="8" height="5" viewBox="0 0 8 5"><path d="M0 .5h8l-4 4z" fill="#555" /></svg>
  </DropBox>
);
const Grip = ({ first }) => <GripBox $first={first}><Dots $w={5} $h={16} /></GripBox>;
const Icon = ({ name, size = 24, set = icons }) => (
  <svg width={size} height={size} viewBox={`0 0 ${size} ${size}`}>{set[name]}</svg>
);

// "|" grip, "/" divider, "v" drop arrow, "x" disabled drop arrow, "-" prefix disabled, "*" prefix pressed
function Tools({ items }) {
  return (
    <ToolRow>
      <Grip first />
      {items.split(" ").map((it, i) => {
        if (it === "|") return <Grip key={i} />;
        if (it === "/") return <Divider key={i} />;
        if (it === "v" || it === "x") return <Arrow key={i} off={it === "x"} />;
        const off = it[0] === "-";
        const active = it[0] === "*";
        return <Cell key={i} $off={off} $active={active}><Icon name={off || active ? it.slice(1) : it} /></Cell>;
      })}
    </ToolRow>
  );
}

const rows = [
  "newDoc open save layout layoutManager style | *hand panSel zoomIn zoomOut zoomFull zoomSel -zoomLayer -zoomNative -zoomLast -zoomNext newMap bookmarkNew bookmark refresh | -identify -action x -select x -selectForm x deselect -table -abacus gear sigma measure v tip annotation v | db",
  "dataSource geopackage shape spatialite memory / virtual | -pencils -pencil -saveEdits -addFeature -vertex x -multiEdit -trash -cut -copy -paste -undo -redo | -label -diagram / pinLabel redLabel / -pinGray -showLabel -moveLabel -rotateLabel -changeLabel | webAdd webFind webSearch",
  "-digitize -moveFeature x -rotateF -simplify -ring -part -fillRing -delRing -delPart -reshape -offset -splitRings -attach -splitF -splitF -merge -rails -rotateS x | -curve x -circle x -ellipse x -rect x -polygon x | help | -c1 -c2 -j -u -d -r | python orange",
];

const menus = [
  ["Pro", "y", "ecto", 47], ["", "E", "dición", 39], ["", "V", "er", 17], ["", "C", "apa", 27],
  ["Confi", "g", "uración", 76], ["", "C", "omplementos", 82], ["Vect", "o", "rial", 45], ["", "R", "áster", 32],
  ["Base de ", "d", "atos", 72], ["", "W", "eb", 24], ["", "M", "alla", 29], ["Pro", "c", "esos", 47], ["A", "y", "uda", 34],
];

const Body = styled.div`flex: 1; min-height: 0; display: flex; border-top: 1px solid #c4c4c4;`;
const SideBar = styled.aside`
  width: 51px; flex: none; border-right: 1px solid #b4b4b4; background: linear-gradient(90deg, #fbfbfb, #eeeeee);
  display: flex; flex-direction: column; padding-top: 4px;
`;
const SideGrip = styled.div`padding-left: 19px; height: 7px;`;
const SideItem = styled.div`height: 32px; flex: none; display: flex; align-items: center; padding-left: 8px; gap: 4px;`;

const sideItems = [["vAdd"], ["raster"], ["mesh"], ["comma"], ["featherAdd"], ["virtualAdd"], ["postgis", 1], ["wms", 1], ["wcs"], ["wfs", 1], ["shape", 1]];

const Docks = styled.section`width: 253px; flex: none; padding-left: 1px; display: flex; flex-direction: column;`;
const DockTitle = styled.div`
  height: ${(p) => p.$h}px; flex: none; display: flex; align-items: center; justify-content: space-between; padding: 0 2px 0 4px;
`;
const DockButtons = styled.div`display: flex; gap: 3px;`;
const DockTools = styled.div`
  height: ${(p) => p.$h}px; flex: none; display: flex; align-items: center; padding-left: 8px; gap: 9px;
`;
const SmallIcon = styled.div`width: 16px; flex: none; ${(p) => p.$off && "opacity: .45;"}`;
const DropArrowSlot = styled.div`margin: 0 -5px 0 -5px;`;
const Frame = styled.div`
  height: ${(p) => p.$h}px; flex: none; background: #fff; border: 1px solid #b4b4b4; display: flex; overflow: hidden;
`;
const SplitH = styled.div`height: 7px; flex: none; display: flex; justify-content: center; padding-top: 2px;`;
const SplitV = styled.div`width: 6px; flex: none; display: flex; align-items: center; padding-left: 3px;`;
const Canvas = styled.main`flex: 1; background: #fff; border-left: 1px solid #b4b4b4; border-bottom: 1px solid #b4b4b4; `;

const Tree = styled.div`flex: 1; padding-top: 1px;`;
const TreeRow = styled.div`height: 18px; display: flex; align-items: center;`;
const Branch = styled.div`width: 23px; padding-left: 8px; flex: none;`;
const Scroll = styled.div`width: 14px; flex: none; background: #e3e3e3; display: flex; flex-direction: column; border-left: 1px solid #b4b4b4;`;
const ScrollButton = styled.div`
  height: 14px; background: #fafafa; display: flex; align-items: center; justify-content: center; flex: none;
  ${(p) => p.$end && "border-top: 1px solid #b4b4b4;"}
`;
const Thumb = styled.div`height: 42px; background: linear-gradient(90deg, #fff, #efefef); border: solid #b4b4b4; border-width: 1px 0;`;

const tree = [
  ["star", "Favoritos", 48, 0], ["book", "Marcadores espaciales", 118, 1], ["home", "Inicio", 29, 1], ["folder", "C:\\", 15, 1],
  ["folder", "D:\\", 15, 1], ["cube", "GeoPackage", 65, 0], ["feather", "SpatiaLite", 51, 0], ["elephant", "PostGIS", 40, 1],
];

const FloatClose = () => (
  <DockButtons>
    <svg width="11" height="11" viewBox="0 0 11 11" fill="none" stroke="#666"><rect x=".5" y=".5" width="10" height="10" rx="1.500" /><path d="M4.500 4.500v-2h4v4h-2M2.500 4.500h4v4h-4z" /></svg>
    <svg width="11" height="11" viewBox="0 0 11 11" fill="none" stroke="#666"><rect x=".5" y=".5" width="10" height="10" rx="1.500" /><path d="M3 3l5 5M8 3L3 8" strokeWidth="2" stroke="#444" /></svg>
  </DockButtons>
);

/* ---------- status bar ---------- */

const StatusBar = styled.footer`height: 28px; flex: none; display: flex; align-items: center; padding: 1px 0 0 4px;`;
const Field = styled.div`
  width: ${(p) => p.$w}px; height: 21px; margin-left: ${(p) => p.$ml || 0}px; flex: none; background: #fff;
  border: 1px solid #b0b0b0; border-radius: 2px; display: flex; align-items: center; padding-left: ${(p) => p.$pl || 5}px;
`;
const Glyph = styled.div`width: ${(p) => p.$w}px; margin-left: ${(p) => p.$ml}px; flex: none;`;
const ComboButton = styled.div`
  width: 19px; height: 19px; margin-left: auto; border-left: 1px solid #b0b0b0; background: linear-gradient(#fff, #f0f0f0);
  display: flex; align-items: center; justify-content: center;
`;
const Spin = styled.div`
  width: 14px; height: 19px; margin-left: auto; border-left: 1px solid #c4c4c4; background: linear-gradient(#fff, #f0f0f0);
  display: flex; align-items: center; justify-content: center;
`;
const SpinArrows = () => (
  <Spin><svg width="8" height="14" viewBox="0 0 8 14"><path d="M0 5h8L4 1zM0 9h8l-4 4z" fill="#555" /></svg></Spin>
);
const CheckBox = styled.div`
  width: 13px; height: 13px; margin-left: 6px; background: #fff; border: 1px solid #a0a0a0; flex: none;
`;

/* ---------- dialog ---------- */

const Dialog = styled.section`
  position: absolute; left: 445px; top: 218px; width: 408px; height: 303px; background: #f0f0f0;
  border: 1px solid #6e6e6e; box-shadow: 0 3px 13px rgba(0, 0, 0, .36); display: flex; flex-direction: column;
`;
const DialogTitle = styled.div`
  height: 30px; flex: none; background: #fff; display: flex; align-items: center; padding: 0 10px 0 8px;
`;
const CloseGlyph = styled.div`margin-top: -2px;`;
const DialogHead = styled.div`display: flex; align-items: flex-start; height: 76px; padding-left: 20px;`;
const PlugBox = styled.div`margin-top: 10px;`;
const Heading = styled.div`margin: 13px 0 0 36px;`;
const ConfigLabel = styled.div`margin: 11px 0 0 69px;`;
const MoreButton = styled.button`
  width: 26px; height: 24px; margin: 10px 0 0 20px; padding: 3px 0 0; border: 1px solid #adadad; border-radius: 3px; flex: none;
  background: linear-gradient(#fff, #f0f0f0); display: flex; justify-content: center; align-items: center; font: inherit; color: inherit;
`;
const Message = styled.div`padding-left: 39px; height: 134px;`;
const Actions = styled.div`display: flex; gap: 19px; padding-left: 30px;`;
const Push = styled.button`
  width: 151px; height: 27px; padding: 0 1px 0 0; display: flex; align-items: center; justify-content: center; font: inherit; color: inherit;
  border: 1px solid ${(p) => (p.$focus ? "#3aa0f0" : "#adadad")}; border-radius: 3px;
  background: ${(p) => (p.$focus ? "linear-gradient(#fcfdfe, #e4e8f0)" : "linear-gradient(#fefefe, #f0f0f0)")};
`;

/* ---------- taskbar ---------- */

const TaskBar = styled.aside`
  width: 67px; flex: none; display: flex; flex-direction: column; background: linear-gradient(#1f2332, #272c3c 40%, #2f3546);
  color: #fff;
`;
const TaskButton = styled.div`
  height: ${(p) => p.$h || 31}px; flex: none; display: flex; align-items: center; justify-content: center; position: relative;
  margin: ${(p) => (p.$active ? "1px 0 0 4px" : 0)}; padding-right: ${(p) => (p.$active ? 5 : 1)}px;
  ${(p) => p.$active && "background: #555a67;"}
  ${(p) => p.$run && css`&::after {
    content: ""; position: absolute; right: 0; top: ${p.$active ? 0 : 4}px; bottom: ${p.$active ? 0 : 5}px;
    width: ${p.$run}px; background: ${p.$run > 2 ? "linear-gradient(90deg, #5b8fb9 50%, #76b9ed 50%)" : "#76b9ed"};
  }`}
`;
const DoubleLine = styled.div`height: 4px; margin: 6px 8px 13px; border: solid #5a5e6b; border-width: 1px 0; flex: none;`;
const Tray = styled.div`
  display: flex; flex: none; height: ${(p) => p.$h}px; align-items: center; justify-content: ${(p) => (p.$center ? "center" : "flex-start")};
  padding-left: ${(p) => p.$pl || 0}px; padding-right: ${(p) => (p.$center ? 1 : 0)}px; gap: 8px;
`;
const Gap = styled.div`height: ${(p) => p.$h}px; flex: none;`;
const BottomLine = styled.div`height: 1px; background: #8d909a; margin-top: 15px;`;

const task = {
  win: <path d="M0 2.300L6.700 1.300v6.200H0zM7.500 1.200L16 0v7.500H7.500zM0 8.400h6.700v6.300L0 13.700zM7.500 8.400H16V16l-8.500-1.200z" fill="#fff" />,
  search: <g fill="none" stroke="#fff" strokeWidth="1.400"><circle cx="10.500" cy="5.500" r="4.800" /><path d="M7 9L.5 15.500" /></g>,
  view: <g fill="none" stroke="#fff"><rect x="1.500" y="4.500" width="9" height="7" /><path d="M.5 0v2.500h11V0M.5 16v-2.500h11V16M14.500 0v3M14.500 9v7" /><rect x="13" y="4.500" width="3" height="3" fill="#fff" stroke="none" /></g>,
  edge: <g><circle cx="8" cy="8" r="8" fill="#1976c4" /><path d="M.3 7C1 2 5 0 8 0c5 0 8 3.500 8 7 0 2-2 3.500-4 3.500-1 0-2 0-1.500-1C12 6 4 2 .3 7z" fill="#42cfa0" /><path d="M.2 7C3 3 7 4 9 6c-4 0-4 5-1 7 2 1 4 1 6 0-3 4-14 4-13.800-6z" fill="#2aa4e0" /><path d="M6.500 8c-.5 3 3 6 7.500 4-3 3-8 3-9.500 0C4 10 5 8.500 6.500 8z" fill="#174c96" /></g>,
  explorer: <g><path d="M0 1.500h6l1 2h9v11H0z" fill="#e8a200" /><path d="M0 4.500h16v9.500H0z" fill="#ffdc73" /><path d="M3 8h10v6.500h-3V11H6v3.500H3z" fill="#3f9fe0" /></g>,
  snip: <g><ellipse cx="8" cy="6" rx="7.500" ry="4.700" fill="#eee" stroke="#c9434f" strokeWidth="1.300" transform="rotate(-15 8 6)" /><path d="M7 6l3-3M6 6l7 1" stroke="#888" /><path d="M9 8l4 5M14 8l-4 5" stroke="#39c" /><circle cx="10" cy="14" r="1.500" stroke="#2684c4" fill="none" /><circle cx="14" cy="12" r="1.500" stroke="#2684c4" fill="none" /></g>,
  word: <g><path d="M7 2h8.500v12H7z" fill="#fff" /><path d="M9 4.500h5M9 7h5M9 9.500h5M9 12h5" stroke="#2b579a" /><path d="M0 1.500L9.500 0v16L0 14.500z" fill="#2b579a" /><text x="1" y="11" fontSize="8" fontWeight="700" fontFamily="Liberation Sans" fill="#fff">W</text></g>,
  bug: <g><path d="M1 2l5 2 4-3 5 2-2 4 3 3-3 4-5-1-5 3-3-5 2-3z" fill="#111" /><path d="M2 3l5 2 7-3M1 8l5-1 8 1M2 12l6-2 6 2" stroke="#2bb6a4" strokeWidth="1.800" fill="none" strokeDasharray="3 1" /><path d="M2 6l11 0M3 10l10 0M6 13h6" stroke="#e9e13a" strokeWidth="1.600" strokeDasharray="4 1" /><path d="M10 4h3M5 9h2" stroke="#d33" strokeWidth="1.200" /></g>,
  android: <g><rect width="16" height="16" rx="2" fill="#7ba428" /><path d="M4 7a4 4 0 0 1 8 0zM4 8h8v5H4zM2.500 8v4M13.500 8v4M5 2l1 2M11 2l-1 2" fill="#fff" stroke="#fff" /><circle cx="8" cy="10" r="2" fill="none" stroke="#7ba428" /></g>,
  spotify: <g><circle cx="8" cy="8" r="8" fill="#1ed760" /><path d="M3.500 5.500q5-1.500 9.500 1M4 8.200q4-1.200 8 1M4.500 10.700q3.500-1 6.500 1" stroke="#191414" strokeWidth="1.400" fill="none" /></g>,
  shield: <g><path d="M1.500 2Q8-1 14.500 2v7q-1 5-6.500 7Q2.500 14 1.500 9z" fill="#b12a20" stroke="#e9a9a0" strokeWidth=".8" /><path d="M4 3.500h8v8H4z" fill="#fff" /><path d="M6.300 3v9M9.700 3v9M3.500 6h9M3.500 9h9" stroke="#b12a20" /></g>,
  chrome: <g><circle cx="8" cy="8" r="7" fill="#fbc116" /><path d="M2 4.500A7 7 0 0 1 14 4.500H8L5 9.700z" fill="#e33b2e" /><path d="M2 4.500l3.500 6L8 11l-1 4A7 7 0 0 1 2 4.500z" fill="#2da94f" /><circle cx="8" cy="8" r="3.200" fill="#4285f4" stroke="#fff" strokeWidth="1" /></g>,
};
const TaskIcon = ({ name }) => (name === "qgis" ? <QLogo /> : <svg width="16" height="16" viewBox="0 0 16 16">{task[name]}</svg>);
const apps = [["edge"], ["explorer", 2], ["qgis"], ["snip"], ["word", 4], ["bug"], ["android"], ["spotify", 2], ["shield", 2], ["chrome", 2], ["qgis", 2, 1]];

export default function App() {
  return (
    <Screen>
      <Global />
      <Window>
        <TitleBar>
          <QLogo />
          <Text w={133} ml={5}>Proyecto sin título - QGIS</Text>
          <Spacer />
          <WindowButtons>
            <svg width="12" height="12" viewBox="0 0 12 12"><path d="M1 6.500h10" stroke="#888" /></svg>
            <svg width="12" height="12" viewBox="0 0 12 12" fill="none" stroke="#888"><path d="M.5 3.500h7v7h-7zM2.500 3.500v-2h7v7h-2" /></svg>
            <svg width="12" height="12" viewBox="0 0 12 12"><path d="M0 1l10 10M10 1L0 11" stroke="#888" /></svg>
          </WindowButtons>
        </TitleBar>
        <MenuBar>
          {menus.map(([a, u, b, w]) => <Text key={a + u + b} w={w}>{a}<Mnemonic>{u}</Mnemonic>{b}</Text>)}
        </MenuBar>
        {rows.map((r) => <Tools key={r} items={r} />)}
        <Body>
          <SideBar>
            <SideGrip><Dots $w={17} $h={5} /></SideGrip>
            {sideItems.map(([name, drop]) => (
              <SideItem key={name}><Icon name={name} />{drop && <Arrow />}</SideItem>
            ))}
          </SideBar>
          <Docks>
            <DockTitle $h={17}><Text w={32}>Capas</Text><FloatClose /></DockTitle>
            <DockTools $h={32}>
              <SmallIcon><Icon set={small} size={16} name="brush" /></SmallIcon>
              <SmallIcon><Icon set={small} size={16} name="group" /></SmallIcon>
              <SmallIcon><Icon set={small} size={16} name="eye" /></SmallIcon>
              <SmallIcon><Icon set={small} size={16} name="filter" /></SmallIcon>
              <SmallIcon $off><Icon set={small} size={16} name="epsilon" /></SmallIcon>
              <DropArrowSlot><Arrow off /></DropArrowSlot>
              <SmallIcon><Icon set={small} size={16} name="expand" /></SmallIcon>
              <SmallIcon><Icon set={small} size={16} name="collapse" /></SmallIcon>
              <SmallIcon><Icon set={small} size={16} name="remove" /></SmallIcon>
            </DockTools>
            <Frame $h={331} />
            <SplitH><Dots $w={17} $h={2} /></SplitH>
            <DockTitle $h={17}><Text w={75}>Navegador (2)</Text><FloatClose /></DockTitle>
            <DockTools $h={32}>
              {["addSel", "refresh", "filter", "collapse", "info"].map((n) => (
                <SmallIcon key={n}><Icon set={small} size={16} name={n} /></SmallIcon>
              ))}
            </DockTools>
            <Frame $h={143}>
              <Tree>
                {tree.map(([icon, label, w, open], i) => (
                  <TreeRow key={i}>
                    <Branch>{!!open && <svg width="5" height="8" viewBox="0 0 5 8"><path d="M0 0l4.500 4L0 8z" fill="#555" /></svg>}</Branch>
                    <Icon set={small} size={16} name={icon} />
                    <Text w={w} ml={6}>{label}</Text>
                  </TreeRow>
                ))}
              </Tree>
              <Scroll>
                <ScrollButton><svg width="8" height="4" viewBox="0 0 8 4"><path d="M0 4h8L4 0z" fill="#555" /></svg></ScrollButton>
                <Thumb />
                <Spacer />
                <ScrollButton $end><svg width="8" height="4" viewBox="0 0 8 4"><path d="M0 0h8L4 4z" fill="#555" /></svg></ScrollButton>
              </Scroll>
            </Frame>
          </Docks>
          <SplitV><Dots $w={2} $h={17} /></SplitV>
          <Canvas />
        </Body>
        <StatusBar>
          <Field $w={255} $pl={8}>
            <svg width="13" height="13" viewBox="0 0 13 13" fill="none" stroke="#888"><circle cx="5" cy="5" r="4.300" /><path d="M8 8l4.500 4.500" strokeWidth="1.500" /></svg>
            <Text w={142} ml={6} size={11} color="#7b7b7b">Escriba para localizar (Ctrl+K)</Text>
          </Field>
          <Text w={60} ml={203} size={11}>Coordenada</Text>
          <Field $w={83} $ml={3} $pl={6}><Text w={69} size={11}>-0.469,-0.706</Text></Field>
          <Glyph $w={16} $ml={5}><svg width="16" height="16" viewBox="0 0 16 16"><ellipse cx="9" cy="9" rx="4" ry="6" transform="rotate(-30 9 9)" fill="#bbb" stroke="#444" /><path d="M3 1l6 8M1 4l6 8M6 1l5 7M10 5l4-4M6 9q4 0 5-4" stroke="#333" fill="none" /></svg></Glyph>
          <Text w={31} ml={12} size={11}>Escala</Text>
          <Field $w={81} $ml={3} $pl={4}><Text w={52} size={11}>1:1446229</Text><ComboButton><svg width="8" height="5" viewBox="0 0 8 5"><path d="M0 .5h8l-4 4z" fill="#555" /></svg></ComboButton></Field>
          <Glyph $w={12} $ml={12}><svg width="12" height="15" viewBox="0 0 12 15"><path d="M2.500 8V4.500a3.500 3.500 0 0 1 7 0V8" fill="none" stroke="#777" strokeWidth="1.800" /><rect y="6.500" width="12" height="8.500" rx="1" fill="#555" /></svg></Glyph>
          <Text w={58} ml={8} size={11}>Amplificador</Text>
          <Field $w={88} $ml={4}><Text w={29} size={11}>100%</Text><SpinArrows /></Field>
          <Text w={43} ml={8} size={11}>Rotación</Text>
          <Field $w={84} $ml={9}><Text w={24} size={11}>0,0 °</Text><SpinArrows /></Field>
          <CheckBox><svg width="11" height="11" viewBox="0 0 11 11"><path d="M2 5.500l2.500 3L9 1.500" fill="none" stroke="#111" strokeWidth="2" /></svg></CheckBox>
          <Text w={60} ml={5} size={11}>Representar</Text>
          <Glyph $w={14} $ml={19}><svg width="14" height="14" viewBox="0 0 14 14"><circle cx="7" cy="7" r="6.500" fill="#777" /><path d="M1 7h12M7 0v14M2 3.500h10M2 10.500h10M7 .5q-5 6 0 13M7 .5q5 6 0 13" stroke="#ddd" strokeWidth=".7" fill="none" /></svg></Glyph>
          <Text w={54} ml={4} size={11}>EPSG:4326</Text>
          <Glyph $w={16} $ml={19}><svg width="16" height="16" viewBox="0 0 16 16"><ellipse cx="8" cy="7" rx="8" ry="6" fill="#666" /><path d="M8 12l5 3.500V10z" fill="#666" /><path d="M3.500 7h2M7 7h2M10.500 7h2" stroke="#fff" strokeWidth="1.800" /></svg></Glyph>
        </StatusBar>

        <Dialog>
          <DialogTitle>
            <QLogo />
            <Text w={90} ml={5}>Censo Segmento</Text>
            <Spacer />
            <CloseGlyph>
              <svg width="11" height="11" viewBox="0 0 11 11"><path d="M.5.5l10 10M10.500.5l-10 10" stroke="#111" strokeWidth="1.100" /></svg>
            </CloseGlyph>
          </DialogTitle>
          <DialogHead>
            <PlugBox>
              <svg width="23" height="24" viewBox="0 0 23 24">
                <rect width="23" height="24" rx="3" fill="#f0cf4e" /><path d="M0 9V3q0-3 3-3h17q3 0 3 3v2Q12 5 0 9z" fill="#f5df83" />
                <path d="M4 19l3-3-1-5 5-3 2-3 5 5-1 4-4 3-5-1-3 3z" fill="#107010" stroke="#0d2b0d" />
                <path d="M11 8l3-3 2 1M16 12l3-3-1-2" fill="none" stroke="#222" strokeWidth="1.800" /><path d="M12 8l2-2M16 11l2-2" stroke="#ddd" strokeWidth=".8" />
              </svg>
            </PlugBox>
            <Heading><Text w={181} size={24.5} lh={35}>Proyecto Mandar</Text></Heading>
            <ConfigLabel><Text w={31} size={11}>Config</Text></ConfigLabel>
            <MoreButton><Text w={11} size={12}>...</Text></MoreButton>
          </DialogHead>
          <Message>
            <Text w={272} size={11} lh={13}>Este es el menu pricipal para acceder a los resultados del</Text>
            <Text w={294} size={11} lh={13}>proceso de segmentación desarrollado por la Coordinación de</Text>
            <Text w={117} size={11} lh={13}>Geoestastina del INDEC.</Text>
          </Message>
          <Actions>
            <Push $focus><Text w={28} size={11}>Radio</Text></Push>
            <Push><Text w={68} size={11}>Segmentación</Text></Push>
          </Actions>
        </Dialog>
      </Window>
      <TaskBar>
        {["win", "search", "view"].map((n) => <TaskButton key={n} $h={30}><TaskIcon name={n} /></TaskButton>)}
        <DoubleLine />
        {apps.map(([n, run, active], i) => (
          <TaskButton key={i} $run={run} $active={active} $h={active ? 30 : 31}><TaskIcon name={n} /></TaskButton>
        ))}
        <Gap $h={61} />
        <Tray $h={24} $pl={21}>
          <svg width="24" height="24" viewBox="0 0 24 24"><circle cx="11" cy="12" r="9.500" fill="#0d92d2" stroke="#fff" strokeWidth="2" /><text x="6" y="18" fontSize="17" fontWeight="700" fontFamily="Liberation Sans" fill="#fff">?</text><circle cx="19" cy="16.500" r="4.800" fill="#e8141c" /><path d="M19 13.500v3.500M19 18v1.500" stroke="#fff" strokeWidth="1.500" /></svg>
        </Tray>
        <Tray $h={32} $pl={12}><svg width="9" height="12" viewBox="0 0 9 12"><path d="M7.500 0l-6 6 6 6" fill="none" stroke="#fff" strokeWidth="1.300" /></svg></Tray>
        <Tray $h={18} $pl={11}>
          <svg width="14" height="16" viewBox="0 0 14 16" fill="none" stroke="#fff"><rect x=".5" y="4.500" width="7.500" height="7" rx="1" /><path d="M8 7l3-2v6l-3-2M3 1.500q3.500-1.500 7 0M3 14.500q3.500 1.500 7 0" /></svg>
          <svg width="16" height="14" viewBox="0 0 16 14" fill="none" stroke="#fff"><path d="M4.500 2.500h11v7h-12v-4M9.500 9.500v3M6 12.500h7M.5 1h4v3h-4zM2.500 4v9" /></svg>
        </Tray>
        <Tray $h={28} $pl={9}>
          <svg width="17" height="14" viewBox="0 0 17 14" fill="none" stroke="#fff"><path d="M.5 4.500h2l4-3v11l-4-3h-2zM8.500 5q1.500 2 0 4M10.500 3q3 4 0 8" /><path d="M13 1.500q3.500 5.500 0 11" stroke="#8b8f9b" /></svg>
        </Tray>
        <Gap $h={7} />
        <Tray $h={16} $center><Text w={18}>ESP</Text></Tray>
        <Gap $h={21} />
        <Tray $h={17} $center><Text w={28}>08:56</Text></Tray>
        <Tray $h={17} $center><Text w={37}>viernes</Text></Tray>
        <Tray $h={17} $center><Text w={53}>4/12/2020</Text></Tray>
        <Gap $h={18} />
        <Tray $h={17} $center><svg width="16" height="16" viewBox="0 0 16 16"><path d="M.7.700h14.600v11.600H10L8 15l-2-2.700H.7z" fill="none" stroke="#fff" strokeWidth="1.200" /></svg></Tray>
        <BottomLine />
      </TaskBar>
    </Screen>
  );
}
